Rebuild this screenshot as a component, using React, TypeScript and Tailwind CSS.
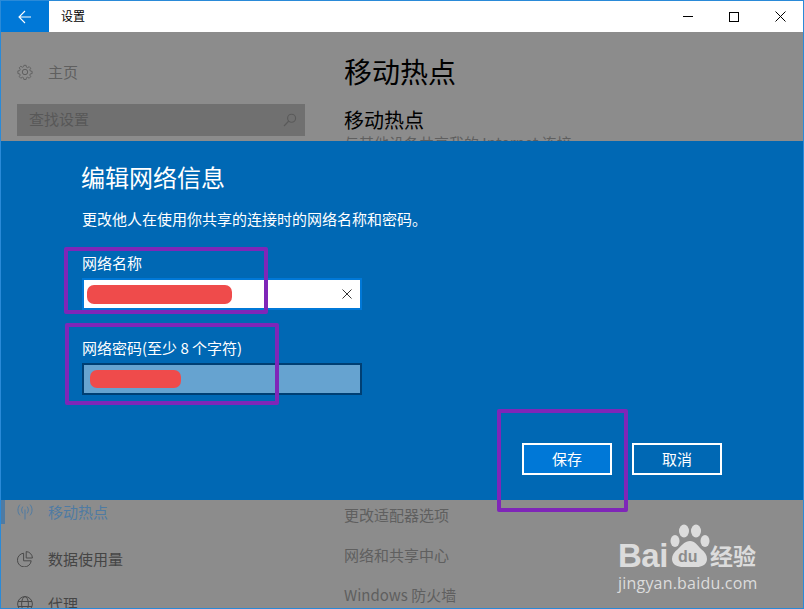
import React from 'react';

const FONT = "font-['Noto_Sans_CJK_SC','Noto_Sans',sans-serif]";

const GearIcon = () => (
  <svg width="16" height="16" viewBox="0 0 16 16" fill="none" stroke="#5f5f5f" strokeWidth="1">
    <circle cx="8" cy="8" r="2.7" />
    <path d="M6.8.6h2.4l.4 2 1.3.6 1.8-1.1 1.7 1.7-1.1 1.8.6 1.3 2 .4v2.4l-2 .4-.6 1.3 1.1 1.8-1.7 1.7-1.8-1.1-1.3.6-.4 2H6.8l-.4-2-1.3-.6-1.8 1.1-1.7-1.7 1.1-1.8-.6-1.3-2-.4V6.8l2-.4.6-1.3-1.1-1.8 1.7-1.7 1.8 1.1 1.3-.6z" transform="translate(.8 .8) scale(.9)" />
  </svg>
);

const SearchIcon = () => (
  <svg width="14" height="14" viewBox="0 0 14 14" fill="none" stroke="#5a5a5a" strokeWidth="1.1">
    <circle cx="8.6" cy="5.2" r="4" />
    <path d="M5.8 8 1 13" />
  </svg>
);

const HotspotIcon = () => (
  <svg width="16" height="16" viewBox="0 0 16 16" fill="none" stroke="#4f7ba3" strokeWidth="1">
    <path d="M8 5.5V15.5" />
    <path d="M5.8 2.6C4.3 4.6 4.3 7.4 5.8 9.4M10.2 2.6c1.5 2 1.5 4.8 0 6.8" />
    <path d="M3 .6C.3 3.6.3 8.4 3 11.4M13 .6c2.7 3 2.7 7.8 0 10.8" />
  </svg>
);

const PieIcon = () => (
  <svg width="16" height="16" viewBox="0 0 16 16" fill="none" stroke="#4a4a4a" strokeWidth="1">
    <path d="M6.6 2.2a6.9 6.9 0 1 0 7.6 7.6H6.6z" />
    <path d="M9.2.6a6.5 6.5 0 0 1 6.2 6.4H9.2z" />
  </svg>
);

const GlobeIcon = () => (
  <svg width="16" height="16" viewBox="0 0 16 16" fill="none" stroke="#4a4a4a" strokeWidth="1">
    <circle cx="8" cy="8" r="7.4" />
    <ellipse cx="8" cy="8" rx="3.4" ry="7.4" />
    <path d="M1 5.5h14M1 10.5h14" />
  </svg>
);

const Overlay = ({ className }: { className: string }) => (
  <div className={`absolute border-[4px] border-[#7f26b8] rounded-[2px] pointer-events-none ${className}`} />
);

export default function App() {
  return (
    <div className={`${FONT} relative w-[804px] h-[609px] overflow-hidden border border-[#2a8ad8] bg-[#8c8c8c]`}>
      {/* title bar */}
      <div className="flex h-[31px] bg-white">
        <div className="flex w-[48px] items-center justify-center bg-[#0078d7]">
          <svg width="14" height="14" viewBox="0 0 14 14" fill="none" stroke="white" strokeWidth="1.1">
            <path d="M13 7H1.2M7 1 1 7l6 6" />
          </svg>
        </div>
        <div className="ml-[12px] mb-[2px] flex items-center text-[12px] text-black">设置</div>
        <div className="ml-auto flex items-center">
          <div className="flex w-[46px] justify-center">
            <div className="h-px w-[10px] bg-black" />
          </div>
          <div className="flex w-[46px] justify-center">
            <div className="h-[10px] w-[10px] border border-black" />
          </div>
          <div className="flex w-[46px] justify-center">
            <svg width="11" height="11" viewBox="0 0 11 11" stroke="black" strokeWidth="1">
              <path d="M.5.5l10 10M10.5.5l-10 10" />
            </svg>
          </div>
        </div>
      </div>

      {/* settings page behind the dialog, top part */}
      <div className="flex h-[109px] overflow-hidden">
        <div className="w-[343px] pl-[16px] pr-[39px]">
          <div className="mt-[30px] flex h-[20px] items-center gap-[15px] text-[15px] text-[#5f5f5f]">
            <GearIcon />
            <span>主页</span>
          </div>
          <div className="mt-[22px] flex h-[32px] items-center justify-between bg-[#707070] pl-[12px] pr-[8px] text-[15px] text-[#585858]">
            <span className="mb-[2px]">查找设置</span>
            <SearchIcon />
          </div>
        </div>
        <div className="text-black">
          <div className="mt-[20px] h-[38px] text-[28px] leading-[38px]">移动热点</div>
          <div className="mt-[18px] h-[24px] text-[20px] leading-[24px]">移动热点</div>
          <div className="mt-[1px] text-[15px] leading-[20px] text-[#5f5f5f]">与其他设备共享我的 Internet 连接</div>
        </div>
      </div>

      {/* dialog band */}
      <div className="relative h-[359px] bg-[#0068b4] pl-[81px] pt-[20px] text-white">
        <div className="-ml-[1px] h-[32px] text-[24px] leading-[32px]">编辑网络信息</div>
        <div className="mt-[16px] h-[20px] text-[15px] leading-[20px]">更改他人在使用你共享的连接时的网络名称和密码。</div>
        <div className="mt-[24px] h-[20px] text-[15px] leading-[20px]">网络名称</div>
        <div className="mt-[5px] flex h-[32px] w-[280px] items-center justify-between border-2 border-[#0078d7] bg-white pl-[3px] pr-[8px]">
          <div className="h-[19px] w-[145px] rounded-[7px] bg-[#ef4b4b]" />
          <svg width="10" height="10" viewBox="0 0 10 10" stroke="#333" strokeWidth="1">
            <path d="M.5.5l9 9M9.5.5l-9 9" />
          </svg>
        </div>
        <div className="mt-[28px] h-[20px] text-[15px] leading-[20px]">网络密码(至少 8 个字符)</div>
        <div className="mt-[5px] flex h-[32px] w-[280px] items-center border-2 border-[#003f73] bg-[#66a3d0] pl-[6px]">
          <div className="h-[18px] w-[91px] rounded-[7px] bg-[#ef4b4b]" />
        </div>
        <div className="absolute left-[521px] top-[302px] flex gap-[20px] text-[15px]">
          <button className="h-[32px] w-[90px] border-2 border-white bg-[#0078d7] text-white">保存</button>
          <button className="h-[32px] w-[90px] border-2 border-white text-white">取消</button>
        </div>
      </div>

      {/* settings page behind the dialog, bottom part */}
      <div className="flex h-[108px] overflow-hidden text-[15px]">
        <div className="w-[343px]">
          <div className="flex h-[24px] items-start">
            <div className="h-[24px] w-[4px] bg-[#4f7ba3]" />
            <div className="ml-[12px] mt-[4px]"><HotspotIcon /></div>
            <span className="ml-[15px] mt-[1px] text-[#4f7ba3]">移动热点</span>
          </div>
          <div className="mt-[23px] flex h-[24px] items-center pl-[16px] text-[#454545]">
            <PieIcon />
            <span className="ml-[15px]">数据使用量</span>
          </div>
          <div className="mt-[21px] flex h-[24px] items-center pl-[16px] text-[#454545]">
            <GlobeIcon />
            <span className="ml-[15px]">代理</span>
          </div>
        </div>
        <div className="pt-[5px] leading-[20px] text-[#5f5f5f]">
          <div>更改适配器选项</div>
          <div className="mt-[20px]">网络和共享中心</div>
          <div className="mt-[20px]">Windows 防火墙</div>
        </div>
      </div>

      {/* annotation boxes drawn over the shot */}
      <Overlay className="left-[63px] top-[246px] h-[67px] w-[204px]" />
      <Overlay className="left-[64px] top-[322px] h-[82px] w-[214px]" />
      <Overlay className="left-[496px] top-[408px] h-[103px] w-[131px]" />

      {/* watermark */}
      <div className="absolute left-[617px] top-[522px] h-[75px] w-[170px] text-[#dcdcdc]">
        <div className="absolute left-0 top-[15px] font-['Liberation_Sans',sans-serif] text-[33px] font-bold leading-[36px] tracking-[-0.5px]">Bai</div>
        <svg className="absolute left-[48px] top-0" width="46" height="46" viewBox="0 0 46 44" fill="#dcdcdc">
          <ellipse cx="9" cy="17" rx="4.5" ry="6" />
          <ellipse cx="18" cy="7" rx="5" ry="6.5" />
          <ellipse cx="30" cy="7" rx="5" ry="6.5" />
          <ellipse cx="39" cy="17" rx="4.5" ry="6" />
          <path d="M24 17c5 0 7 4 11 8 4 3 6 6 6 10 0 6-6 8-10 8H17C12 43 6 41 6 35c0-4 2-7 6-10 4-4 7-8 12-8z" />
        </svg>
        <div className="absolute left-[60px] top-[24px] font-['Liberation_Sans',sans-serif] text-[16px] font-bold leading-[20px] text-[#8c8c8c]">du</div>
        <div className="absolute left-[92px] top-[16px] text-[23px] font-bold leading-[32px]">经验</div>
        <div className="absolute left-0 top-[48px] whitespace-nowrap font-['Open_Sans',sans-serif] text-[16px] leading-[24px] tracking-[0.2px]">jingyan.baidu.com</div>
      </div>
    </div>
  );
}
